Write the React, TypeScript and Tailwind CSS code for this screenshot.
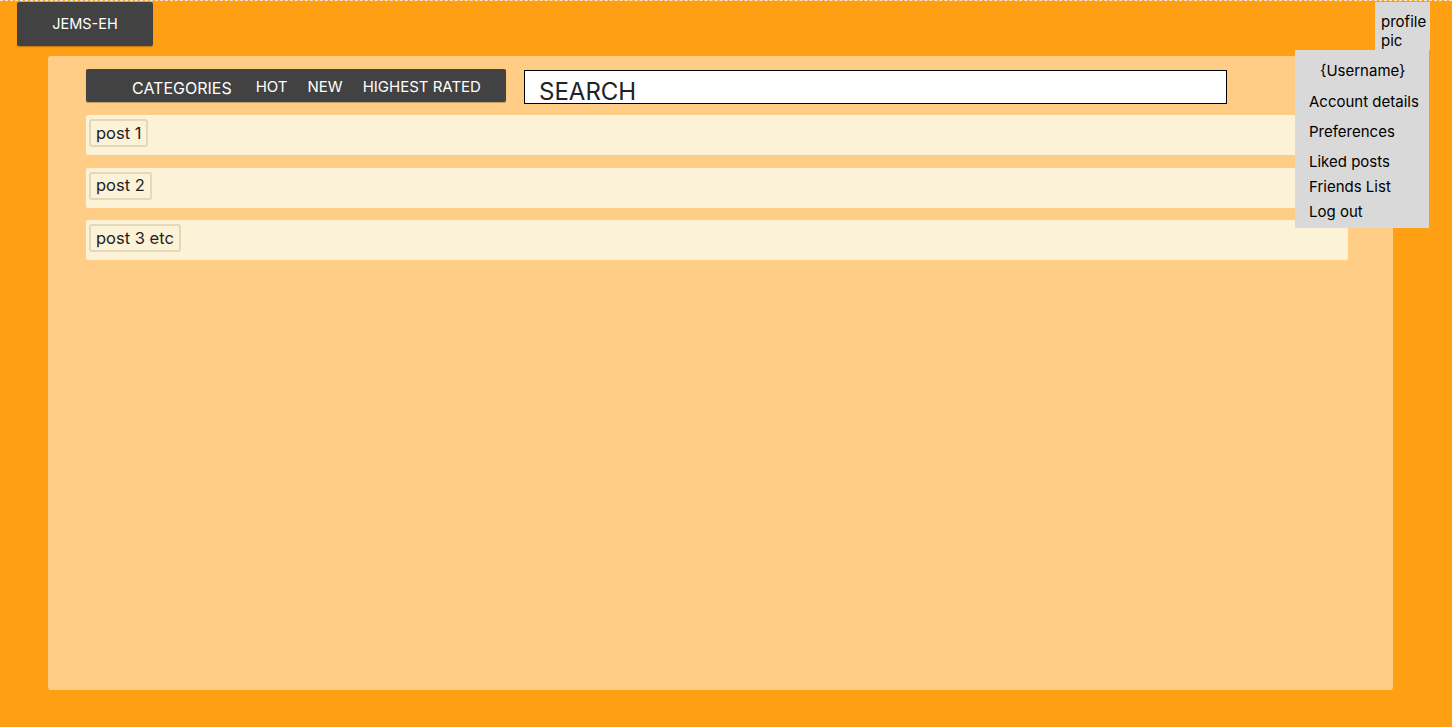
import { ReactElement } from "react";

const posts = ["post 1", "post 2", "post 3 etc"];

export default function App(): ReactElement {
  return (
    <div
      className="relative w-full min-h-[727px] bg-[#ff9f13] border-t border-dashed border-[#f3e9dc] overflow-hidden"
      style={{ fontFamily: "Inter, 'Noto Sans', sans-serif" }}
    >
      {/* Header */}
      <div className="h-[55px] flex items-start justify-between pl-[17px] pr-[22px]">
        <div className="mt-[1px] w-[136px] h-[44px] bg-[#424242] rounded-[2px] shadow-[0_1px_1px_rgba(0,0,0,0.25)] flex items-center justify-center text-white text-[14.5px]">
          JEMS-EH
        </div>
        <div className="mt-[1px] w-[55px] h-[48px] bg-[#d9d9d9] px-[6px] pt-[10px] text-[15px] leading-[19px] text-black">
          profile pic
        </div>
      </div>

      {/* Profile dropdown */}
      <div className="absolute left-[1295px] top-[49px] w-[134px] h-[178px] bg-[#d9d9d9] text-[15px] text-black pl-[14px]">
        <div className="pt-[11px] pl-[11px] leading-[19px]">{"{Username}"}</div>
        <div className="mt-[12px] leading-[19px]">Account details</div>
        <div className="mt-[11px] leading-[19px]">Preferences</div>
        <div className="mt-[11px] leading-[19px]">Liked posts</div>
        <div className="mt-[6px] leading-[19px]">Friends List</div>
        <div className="mt-[6px] leading-[19px]">Log out</div>
      </div>

      {/* Main panel */}
      <div className="ml-[48px] mr-[59px] h-[634px] bg-[#ffcd85] rounded-[3px] pl-[38px] pr-[45px] pt-[13px]">
        <div className="flex items-start gap-[18px]">
          <div className="w-[420px] h-[33px] bg-[#424242] rounded-[2px] shadow-[0_1px_1px_rgba(0,0,0,0.25)] flex items-center pl-[46px] pt-[4px] text-white">
            <span className="text-[16px]">CATEGORIES</span>
            <span className="text-[15px] ml-[24px]">HOT</span>
            <span className="text-[15px] ml-[20px]">NEW</span>
            <span className="text-[15px] ml-[20px]">HIGHEST RATED</span>
          </div>
          <div className="mt-[1px] w-[703px] h-[34px] bg-white border border-black pl-[14px] pt-[9px]">
            <div className="text-[24px] leading-[24px] text-[#222]">SEARCH</div>
          </div>
        </div>

        <div className="mt-[11px] flex flex-col gap-[12.5px]">
          {posts.map((p) => (
            <div key={p} className="h-[40px] bg-[#fbf2d7] rounded-[2px] flex items-start pt-[4px] pl-[3px]">
              <span className="px-[5px] h-[28px] flex items-center border-2 border-[#e3d9b8] rounded-[3px] text-[16.5px] text-[#222]">
                {p}
              </span>
            </div>
          ))}
        </div>
      </div>
    </div>
  );
}
